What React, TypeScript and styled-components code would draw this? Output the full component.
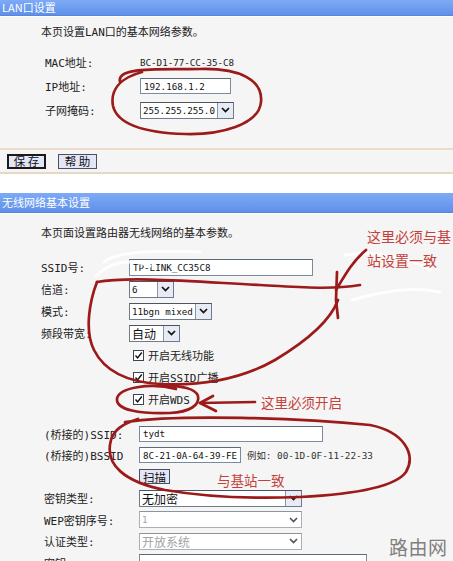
import React from "react";
import styled, { createGlobalStyle } from "styled-components";

const GlobalStyle = createGlobalStyle`
  html, body { margin: 0; padding: 0; background: #ffffff; }
  body { width: 453px; height: 561px; overflow: hidden; }
`;

const LABEL_FONT = `"DejaVu Sans Mono", "Noto Sans CJK SC", monospace`;
const VALUE_FONT = `"DejaVu Sans Mono", "Liberation Mono", monospace`;
const NOTE_FONT = `"Noto Sans CJK SC", "Noto Sans", sans-serif`;

const Page = styled.div`
  position: relative;
  width: 453px;
  height: 561px;
  overflow: hidden;
  display: flex;
  flex-direction: column;
  font-family: ${LABEL_FONT};
  color: #222;
`;

const TitleBar = styled.div<{ $height: number }>`
  height: ${({ $height }) => $height}px;
  line-height: ${({ $height }) => $height - 1}px;
  padding-left: 2px;
  box-sizing: border-box;
  background: linear-gradient(#7eaaf6, #5f90ea);
  border-bottom: 1px solid #5a86d8;
  color: #ffffff;
  font-family: ${NOTE_FONT};
  font-size: 11px;
  flex-shrink: 0;
`;

const Panel = styled.div<{ $height?: number; $top: number }>`
  background: #f5f5f5;
  border-top: 1px solid #ffffff;
  box-sizing: border-box;
  padding-top: ${({ $top }) => $top - 1}px;
  height: ${({ $height }) => ($height ? `${$height}px` : "auto")};
  flex: ${({ $height }) => ($height ? "0 0 auto" : "1 1 auto")};
`;

const Intro = styled.div`
  padding-left: 41px;
  height: 16px;
  line-height: 16px;
  font-size: 11px;
  font-family: ${LABEL_FONT};
`;

const FieldGrid = styled.div<{
  $indent: number;
  $labelWidth: number;
  $rowHeight: number;
  $gap: number;
}>`
  display: grid;
  grid-template-columns: ${({ $labelWidth }) => $labelWidth}px 1fr;
  grid-auto-rows: ${({ $rowHeight }) => $rowHeight}px;
  align-items: center;
  padding-left: ${({ $indent }) => $indent}px;
  margin-top: ${({ $gap }) => $gap}px;
`;

const Label = styled.div`
  font-size: 11px;
  white-space: nowrap;
`;

const Value = styled.div`
  font-family: ${VALUE_FONT};
  font-size: 9.2px;
  display: flex;
  align-items: center;
  gap: 6px;
`;

const TextBox = styled.div<{ $width: number; $height?: number }>`
  width: ${({ $width }) => $width}px;
  height: ${({ $height }) => $height ?? 16}px;
  box-sizing: border-box;
  border: 1px solid #7b8b9c;
  border-top-color: #5d6a78;
  background: #ffffff;
  padding-left: 3px;
  display: flex;
  align-items: center;
  font-family: ${VALUE_FONT};
  font-size: 9.2px;
  color: #111;
`;

const Hint = styled.span`
  font-family: ${LABEL_FONT};
  font-size: 9.4px;
  color: #333;
`;

const SelectBox = styled.div<{ $width: number; $disabled?: boolean }>`
  width: ${({ $width }) => $width}px;
  height: 17px;
  box-sizing: border-box;
  display: flex;
  border: 1px solid ${({ $disabled }) => ($disabled ? "#a9b0b8" : "#6e7b88")};
  border-top-color: ${({ $disabled }) => ($disabled ? "#8d949b" : "#4a5560")};
  background: #ffffff;
`;

const SelectText = styled.div<{ $disabled?: boolean; $cjk?: boolean }>`
  flex: 1;
  display: flex;
  align-items: center;
  padding-left: 2px;
  font-family: ${({ $cjk }) => ($cjk ? NOTE_FONT : VALUE_FONT)};
  font-size: ${({ $cjk }) => ($cjk ? "12px" : "9.2px")};
  color: ${({ $disabled }) => ($disabled ? "#a3a3a3" : "#111")};
`;

const SelectArrow = styled.div<{ $plain?: boolean }>`
  width: 16px;
  display: flex;
  align-items: center;
  justify-content: center;
  box-sizing: border-box;
  background: ${({ $plain }) => ($plain ? "#ffffff" : "#e6ebf5")};
  border-left: ${({ $plain }) => ($plain ? "none" : "1px solid #8c96a3")};
`;

const CheckRow = styled.div`
  display: flex;
  align-items: center;
  gap: 4px;
  margin-left: 4px;
  font-size: 11px;
`;

const CheckBox = styled.span`
  width: 11px;
  height: 11px;
  box-sizing: border-box;
  border: 1px solid #3d4650;
  background: #ffffff;
  display: flex;
  align-items: center;
  justify-content: center;
`;

const ButtonBar = styled.div`
  height: 26px;
  box-sizing: border-box;
  border-top: 2px solid #eddcc8;
  border-bottom: 2px solid #e6d8c2;
  background: #f5f5f5;
  display: flex;
  align-items: center;
  gap: 12px;
  padding-left: 7px;
  flex-shrink: 0;
`;

const Button = styled.div<{ $width: number; $focused?: boolean }>`
  width: ${({ $width }) => $width}px;
  height: 15px;
  box-sizing: border-box;
  border: ${({ $focused }) => ($focused ? "2px solid #1a1a1a" : "1px solid #4b4f60")};
  background: #e3e6f6;
  display: flex;
  align-items: center;
  justify-content: center;
  font-family: ${NOTE_FONT};
  font-size: 11.5px;
  color: #111;
  white-space: pre;
`;

const Gap = styled.div<{ $size: number }>`
  height: ${({ $size }) => $size}px;
  flex-shrink: 0;
`;

const Overlay = styled.svg`
  position: absolute;
  left: 0;
  top: 0;
  pointer-events: none;
`;

const Note = styled.div<{ $left: number; $top: number; $size: number }>`
  position: absolute;
  left: ${({ $left }) => $left}px;
  top: ${({ $top }) => $top}px;
  font-family: ${NOTE_FONT};
  font-size: ${({ $size }) => $size}px;
  line-height: 16px;
  color: #c4403a;
  white-space: nowrap;
`;

const Watermark = styled.div`
  position: absolute;
  left: 389px;
  top: 535px;
  font-family: ${NOTE_FONT};
  font-size: 19px;
  line-height: 24px;
  color: #808080;
  letter-spacing: 0.5px;
`;

const Chevron: React.FC<{ color?: string }> = ({ color = "#111" }) => (
  <svg width="9" height="6" viewBox="0 0 9 6">
    <polyline points="1,1 4.5,4.6 8,1" fill="none" stroke={color} strokeWidth="1.7" />
  </svg>
);

const Select: React.FC<{
  width: number;
  text: string;
  cjk?: boolean;
  disabled?: boolean;
  plain?: boolean;
}> = ({ width, text, cjk, disabled, plain }) => (
  <SelectBox $width={width} $disabled={disabled}>
    <SelectText $cjk={cjk} $disabled={disabled}>{text}</SelectText>
    <SelectArrow $plain={plain}>
      <Chevron color={disabled ? "#555" : "#111"} />
    </SelectArrow>
  </SelectBox>
);

const Check: React.FC<{ label: string }> = ({ label }) => (
  <CheckRow>
    <CheckBox>
      <svg width="9" height="9" viewBox="0 0 9 9">
        <polyline points="1.5,4.5 3.6,7 7.8,1.5" fill="none" stroke="#111" strokeWidth="1.4" />
      </svg>
    </CheckBox>
    {label}
  </CheckRow>
);

const RED = "#9c1a1a";

const Scribbles: React.FC = () => (
  <Overlay width="453" height="561" viewBox="0 0 453 561">
    <g fill="none" stroke="#ffffff" strokeWidth="3" strokeLinecap="round" opacity="0.9">
      <path d="M 104 262 C 115 252, 150 250, 200 252" />
      <path d="M 96 276 C 110 262, 130 258, 150 266" />
      <path d="M 345 255 C 380 250, 410 258, 430 270" />
      <path d="M 352 300 C 380 292, 410 286, 440 292" />
    </g>
    <g fill="none" stroke={RED} strokeWidth="2.7" strokeLinecap="round" strokeLinejoin="round">
      {/* IP / subnet loop */}
      <path d="M 120 82 C 116 66, 160 70, 200 69 C 240 68, 263 80, 261 102 C 259 125, 220 135, 185 134 C 150 133, 118 126, 113 106 C 110 90, 120 78, 142 72" />
      {/* channel / mode / bandwidth loop */}
      <path d="M 97 282 C 130 276, 200 282, 260 285 C 300 287, 330 290, 360 285" />
      <path d="M 97 282 C 90 300, 84 330, 94 350 C 104 370, 125 382, 160 384 C 200 386, 240 380, 275 360 C 305 342, 330 322, 338 300" />
      <path d="M 337 272 L 336 300 L 338 318" />
      <path d="M 336 290 C 345 275, 352 262, 366 250" />
      {/* WDS loop and arrow */}
      <path d="M 176 389 C 150 382, 118 388, 117 399 C 116 410, 140 414, 170 413 C 190 412, 200 405, 198 396 C 196 389, 182 385, 160 386" />
      <path d="M 255 402 L 200 403" />
      <path d="M 213 396 L 200 403 L 216 411" />
      {/* bridged ssid / bssid loop */}
      <path d="M 125 422 C 180 414, 300 418, 370 425 C 405 432, 416 455, 406 472 C 393 490, 340 495, 300 497 C 250 499, 200 496, 165 490 C 125 482, 104 465, 111 440 C 114 430, 122 424, 138 419" />
    </g>
  </Overlay>
);

export default function App() {
  return (
    <>
      <GlobalStyle />
      <Page>
        <TitleBar $height={16}>LAN口设置</TitleBar>
        <Panel $height={132} $top={9}>
          <Intro>本页设置LAN口的基本网络参数。</Intro>
          <FieldGrid $indent={45} $labelWidth={95} $rowHeight={24} $gap={9}>
            <Label>MAC地址:</Label>
            <Value>BC-D1-77-CC-35-C8</Value>
            <Label>IP地址:</Label>
            <Value>
              <TextBox $width={91}>192.168.1.2</TextBox>
            </Value>
            <Label>子网掩码:</Label>
            <Value>
              <Select width={94} text="255.255.255.0" />
            </Value>
          </FieldGrid>
        </Panel>
        <ButtonBar>
          <Button $width={39} $focused>保 存</Button>
          <Button $width={39}>帮 助</Button>
        </ButtonBar>
        <Gap $size={19} />
        <TitleBar $height={20}>无线网络基本设置</TitleBar>
        <Panel $top={13}>
          <Intro>本页面设置路由器无线网络的基本参数。</Intro>
          <FieldGrid $indent={41} $labelWidth={88} $rowHeight={22} $gap={14}>
            <Label>SSID号:</Label>
            <Value>
              <TextBox $width={184} $height={17}>TP-LINK_CC35C8</TextBox>
            </Value>
            <Label>信道:</Label>
            <Value>
              <Select width={45} text="6" />
            </Value>
            <Label>模式:</Label>
            <Value>
              <Select width={83} text="11bgn mixed" />
            </Value>
            <Label>频段带宽:</Label>
            <Value>
              <Select width={51} text="自动" cjk />
            </Value>
            <span />
            <Check label="开启无线功能" />
            <span />
            <Check label="开启SSID广播" />
            <span />
            <Check label="开启WDS" />
          </FieldGrid>
          <FieldGrid $indent={44} $labelWidth={95} $rowHeight={21.5} $gap={13}>
            <Label>(桥接的)SSID:</Label>
            <Value>
              <TextBox $width={184}>tydt</TextBox>
            </Value>
            <Label>(桥接的)BSSID</Label>
            <Value>
              <TextBox $width={102}>8C-21-0A-64-39-FE</TextBox>
              <Hint>例如: 00-1D-0F-11-22-33</Hint>
            </Value>
            <span />
            <Value>
              <Button $width={31}>扫描</Button>
            </Value>
            <Label>密钥类型:</Label>
            <Value>
              <Select width={163} text="无加密" cjk />
            </Value>
            <Label>WEP密钥序号:</Label>
            <Value>
              <Select width={163} text="1" disabled plain />
            </Value>
            <Label>认证类型:</Label>
            <Value>
              <Select width={163} text="开放系统" cjk disabled plain />
            </Value>
            <Label>密钥:</Label>
            <Value>
              <TextBox $width={228} $height={18} />
            </Value>
          </FieldGrid>
        </Panel>
        <Scribbles />
        <Note $left={367} $top={228} $size={14}>这里必须与基</Note>
        <Note $left={367} $top={252} $size={14}>站设置一致</Note>
        <Note $left={261} $top={394} $size={13.5}>这里必须开启</Note>
        <Note $left={217} $top={472} $size={13.5}>与基站一致</Note>
        <Watermark>路由网</Watermark>
      </Page>
    </>
  );
}
